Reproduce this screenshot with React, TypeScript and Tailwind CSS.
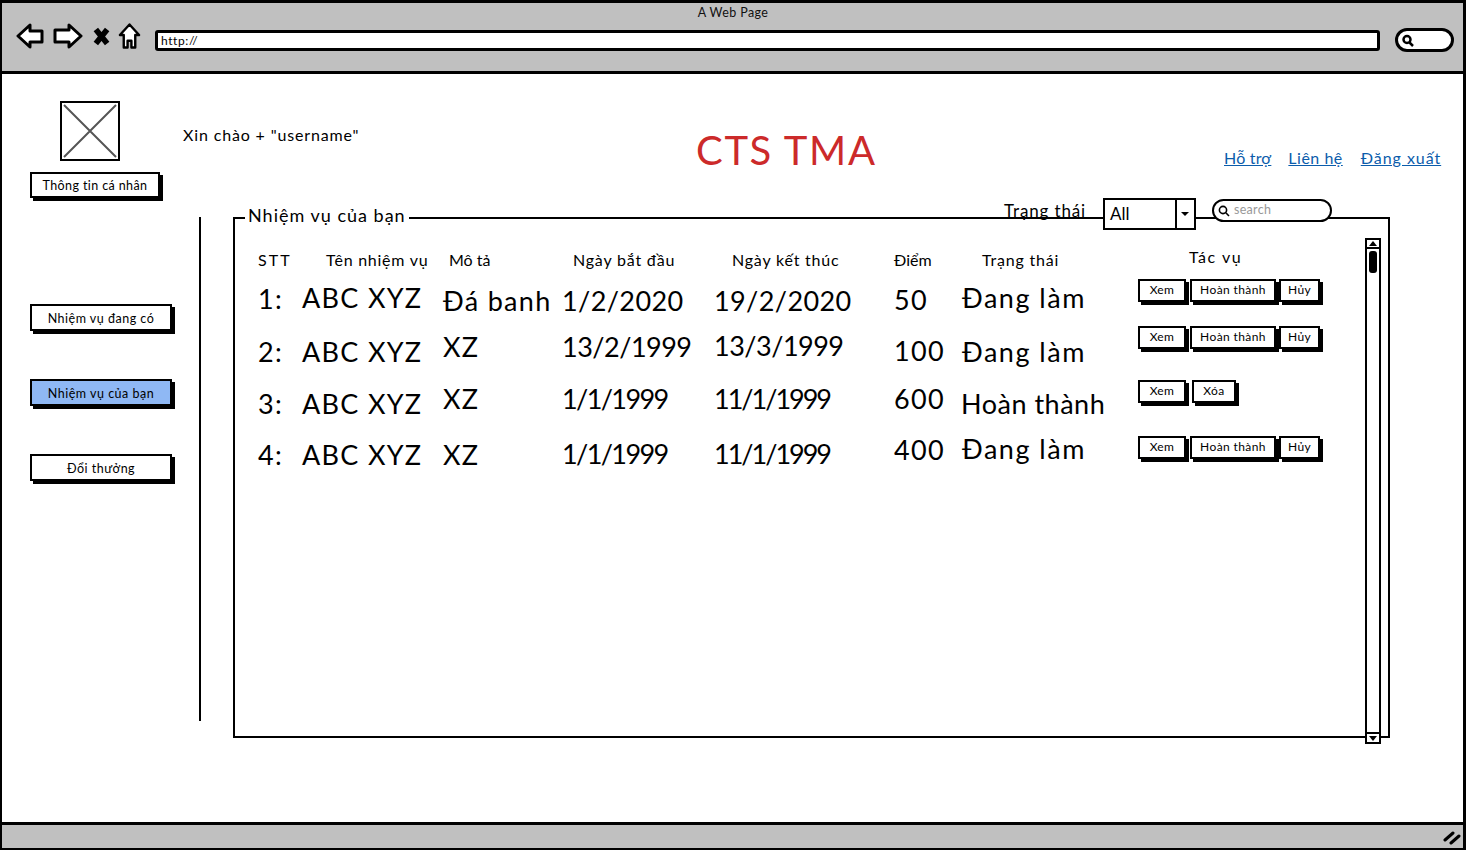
const font = { fontFamily: "Lato, 'Noto Sans', sans-serif" };

function SketchButton({ label, className = "" }: { label: string; className?: string }) {
  return (
    <button className={`flex h-[23px] items-center justify-center border-2 border-black bg-white pb-[2px] text-[12px] tracking-[0.4px] text-black shadow-[3px_3px_0_#000] ${className}`}>
      {label}
    </button>
  );
}

function NavButton({ label, active = false }: { label: string; active?: boolean }) {
  return (
    <button
      className={`flex h-[27px] w-[142px] items-center justify-center border-2 border-black pt-[3px] text-[12.5px] tracking-[0.5px] text-black shadow-[3px_3px_0_#000] ${active ? "bg-[#8fb8f4]" : "bg-white"}`}
    >
      {label}
    </button>
  );
}

function BrowserIcons() {
  return (
    <div className="flex h-[26px] w-[129px] items-center">
      <svg width="28" height="26" viewBox="0 0 28 26" fill="#fff" stroke="#000" strokeWidth="3" strokeLinejoin="round">
        <path d="M2 13 L14 2 V8 H26 V19 H14 V24 Z" />
      </svg>
      <svg className="ml-[9px]" width="30" height="26" viewBox="0 0 30 26" fill="#fff" stroke="#000" strokeWidth="3" strokeLinejoin="round">
        <path d="M28 13 L16 2 V7 H2 V19 H16 V24 Z" />
      </svg>
      <svg className="ml-[10px]" width="17" height="19" viewBox="0 0 18 19" fill="none" stroke="#000" strokeWidth="6">
        <path d="M3 2 L15 17 M15 2 L3 17" />
      </svg>
      <svg className="ml-[8px]" width="23" height="28" viewBox="0 0 24 28" fill="#fff" stroke="#000" strokeWidth="2.5" strokeLinejoin="round">
        <path d="M12 2 L22 13 H18 V26 H14 V19 H10 V26 H6 V13 H2 Z" />
      </svg>
    </div>
  );
}

function Toolbar() {
  return (
    <div className="flex h-[71px] flex-col border-b-[3px] border-black bg-[#c0c0c0]">
      <div className="flex h-[20px] items-center justify-center pl-[1px] text-[12.5px] tracking-[0.4px] text-[#111]">A Web Page</div>
      <div className="flex items-start pl-[14px]">
        <BrowserIcons />
        <div className="ml-[10px] mt-[7px] flex h-[21px] w-[1225px] items-center rounded-[3px] border-[3px] border-black bg-white pl-[3px] text-[12px] tracking-[0.6px] text-black">
          http://
        </div>
        <div className="ml-[15px] mt-[5px] flex h-[24px] w-[59px] items-center rounded-[12px] border-[3px] border-black bg-white pl-[3px]">
          <svg width="13" height="13" viewBox="0 0 13 13" fill="none" stroke="#000" strokeWidth="2.5">
            <circle cx="6" cy="5.5" r="3.5" />
            <path d="M8.5 8.5 L12 12" />
          </svg>
        </div>
      </div>
    </div>
  );
}

function Header() {
  return (
    <div className="flex h-[124px] shrink-0">
      <div className="flex w-[180px] flex-col pl-[28px] pt-[27px]">
        <div className="ml-[30px] h-[60px] w-[60px] border-2 border-black bg-white">
          <svg width="56" height="56" viewBox="0 0 56 56" stroke="#555" strokeWidth="2">
            <path d="M2 2 L54 54 M54 2 L2 54" />
          </svg>
        </div>
        <button className="mt-[11px] flex h-[27px] w-[130px] items-center justify-center border-2 border-black bg-white pt-[3px] text-[12.5px] tracking-[0.4px] text-black shadow-[3px_3px_0_#000]">
          Thông tin cá nhân
        </button>
      </div>
      <div className="w-[514px] pl-[1px] pt-[49px] text-[16px] tracking-[0.85px] text-black">Xin chào + "username"</div>
      <div className="w-[528px] pt-[50px] text-[40px] leading-[52px] tracking-[1.7px] text-[#cc2a2a]">CTS TMA</div>
      <div className="flex pt-[73px] text-[16px] leading-[22px] tracking-[0.5px] text-[#0b5cab]">
        <a className="tracking-[0.2px] underline">Hỗ trợ</a>
        <a className="ml-[17px] underline">Liên hệ</a>
        <a className="ml-[18px] tracking-[0.95px] underline">Đăng xuất</a>
      </div>
    </div>
  );
}

function Sidebar() {
  return (
    <div className="flex w-[199px] shrink-0 justify-between">
      <div className="flex flex-col gap-[48px] pl-[28px] pt-[106px]">
        <NavButton label="Nhiệm vụ đang có" />
        <NavButton label="Nhiệm vụ của bạn" active />
        <NavButton label="Đổi thưởng" />
      </div>
      <div className="mt-[19px] h-[504px] w-[2px] bg-black" />
    </div>
  );
}

const data = "text-[27px] leading-[32px] tracking-[1.3px] text-black";
const date2020 = "text-[27px] leading-[32px] tracking-[0.4px] text-black";
const date1999 = "text-[27px] leading-[32px] tracking-[-0.5px] text-black";
const dateNarrow = "text-[27px] leading-[32px] tracking-[-1.6px] text-black";
const dateElevens = "text-[27px] leading-[32px] tracking-[-2px] text-black";
const head = "text-[16px] leading-[20px] text-black";

function TaskTable() {
  return (
    <div className="grid flex-1 grid-cols-[44px_141px_119px_152px_180px_68px_176px_1fr] content-start pl-[23px] pt-[31px]">
      {/* header row */}
      <div className={`mb-[9px] tracking-[2px] ${head}`}>STT</div>
      <div className={`pl-[24px] tracking-[0.75px] ${head}`}>Tên nhiệm vụ</div>
      <div className={`pl-[6px] tracking-[0px] ${head}`}>Mô tả</div>
      <div className={`pl-[11px] tracking-[0.8px] ${head}`}>Ngày bắt đầu</div>
      <div className={`pl-[18px] tracking-[0.8px] ${head}`}>Ngày kết thúc</div>
      <div className={`tracking-[0px] ${head}`}>Điểm</div>
      <div className={`pl-[20px] tracking-[0.8px] ${head}`}>Trạng thái</div>
      <div className={`-mt-[3px] pl-[51px] tracking-[1.5px] ${head}`}>Tác vụ</div>

      {/* row 1 */}
      <div className={`mt-[4px] h-[43px] ${data}`}>1:</div>
      <div className={`mt-[3px] ${data}`}>ABC XYZ</div>
      <div className={`mt-[6px] ${data}`}>Đá banh</div>
      <div className={`mt-[6px] ${date2020}`}>1/2/2020</div>
      <div className={`mt-[6px] ${date2020}`}>19/2/2020</div>
      <div className={`mt-[5px] ${data}`}>50</div>
      <div className={`mt-[3px] tracking-[1.5px] ${data}`}>Đang làm</div>
      <div className="flex">
        <SketchButton label="Xem" className="w-[48px]" />
        <SketchButton label="Hoàn thành" className="ml-[4px] w-[86px]" />
        <SketchButton label="Hủy" className="ml-[3px] w-[41px]" />
      </div>

      {/* row 2 */}
      <div className={`mt-[10px] h-[44px] ${data}`}>2:</div>
      <div className={`mt-[10px] ${data}`}>ABC XYZ</div>
      <div className={`mt-[5px] ${data}`}>XZ</div>
      <div className={`mt-[5px] whitespace-nowrap ${date1999}`}>13/2/1999</div>
      <div className={`mt-[4px] ${date1999}`}>13/3/1999</div>
      <div className={`mt-[9px] ${data}`}>100</div>
      <div className={`mt-[10px] tracking-[1.5px] ${data}`}>Đang làm</div>
      <div className="flex">
        <SketchButton label="Xem" className="w-[48px]" />
        <SketchButton label="Hoàn thành" className="ml-[4px] w-[86px]" />
        <SketchButton label="Hủy" className="ml-[3px] w-[41px]" />
      </div>

      {/* row 3 */}
      <div className={`mt-[8px] h-[48px] ${data}`}>3:</div>
      <div className={`mt-[8px] ${data}`}>ABC XYZ</div>
      <div className={`mt-[3px] ${data}`}>XZ</div>
      <div className={`mt-[3px] ${dateNarrow}`}>1/1/1999</div>
      <div className={`mt-[3px] ${dateElevens}`}>11/1/1999</div>
      <div className={`mt-[3px] ${data}`}>600</div>
      <div className={`mt-[8px] -ml-[1px] whitespace-nowrap text-[27px] leading-[32px] tracking-[0.5px] text-black`}>Hoàn thành</div>
      <div className="flex">
        <SketchButton label="Xem" className="w-[48px]" />
        <SketchButton label="Xóa" className="ml-[6px] w-[44px]" />
      </div>

      {/* row 4 */}
      <div className={`mt-[3px] ${data}`}>4:</div>
      <div className={`mt-[3px] ${data}`}>ABC XYZ</div>
      <div className={`mt-[3px] ${data}`}>XZ</div>
      <div className={`mt-[2px] ${dateNarrow}`}>1/1/1999</div>
      <div className={`mt-[2px] ${dateElevens}`}>11/1/1999</div>
      <div className={`-mt-[2px] ${data}`}>400</div>
      <div className={`-mt-[3px] tracking-[1.5px] ${data}`}>Đang làm</div>
      <div className="flex">
        <SketchButton label="Xem" className="w-[48px]" />
        <SketchButton label="Hoàn thành" className="ml-[4px] w-[86px]" />
        <SketchButton label="Hủy" className="ml-[3px] w-[41px]" />
      </div>
    </div>
  );
}

function Scrollbar() {
  return (
    <div className="mr-[7px] mt-[19px] flex h-[506px] w-[16px] shrink-0 flex-col border-2 border-black bg-white">
      <div className="flex h-[9px] items-center justify-center border-b-2 border-black">
        <div className="h-0 w-0 border-x-[4px] border-b-[5px] border-x-transparent border-b-black" />
      </div>
      <div className="ml-[2px] mt-[2px] h-[22px] w-[8px] rounded-[3px] bg-black" />
      <div className="flex-1" />
      <div className="flex h-[10px] items-center justify-center border-t-2 border-black">
        <div className="h-0 w-0 border-x-[4px] border-t-[5px] border-x-transparent border-t-black" />
      </div>
    </div>
  );
}

function Panel() {
  return (
    <div className="relative ml-[32px] mt-[19px] flex h-[521px] w-[1157px] border-2 border-black bg-white">
      {/* legend sits over the panel border */}
      <div className="absolute -top-[15px] left-[10px] bg-white px-[3px] text-[18px] leading-[22px] tracking-[1px] text-black">
        Nhiệm vụ của bạn
      </div>
      {/* filter controls sit over the panel border */}
      <div className="absolute -top-[21px] left-[769px] flex items-start">
        <div className="mt-[2px] text-[17px] leading-[22px] tracking-[0.85px] text-black">Trạng thái</div>
        <div className="ml-[17px] flex h-[32px] w-[93px] border-2 border-black bg-white">
          <div className="flex-1 pl-[5px] text-[17px] leading-[28px] text-black">All</div>
          <div className="flex w-[19px] items-center justify-center border-l-2 border-black">
            <div className="h-0 w-0 border-x-[4px] border-t-[4px] border-x-transparent border-t-black" />
          </div>
        </div>
        <div className="ml-[16px] mt-[1px] flex h-[23px] w-[120px] items-center rounded-[12px] border-2 border-black bg-white pl-[4px]">
          <svg width="12" height="12" viewBox="0 0 12 12" fill="none" stroke="#000" strokeWidth="1.6">
            <circle cx="5" cy="5" r="3.6" />
            <path d="M7.8 7.8 L11 11" />
          </svg>
          <span className="ml-[4px] text-[12.5px] tracking-[0.3px] text-[#999]">search</span>
        </div>
      </div>
      <TaskTable />
      <Scrollbar />
    </div>
  );
}

export default function App() {
  return (
    <div className="h-[851px] w-[1467px] bg-white" style={font}>
      <div className="flex h-[850px] w-[1466px] flex-col border-2 border-t-[3px] border-r-[3px] border-black bg-white">
        <Toolbar />
        <div className="flex flex-1 flex-col">
          <Header />
          <div className="flex flex-1">
            <Sidebar />
            <Panel />
          </div>
        </div>
        <div className="flex h-[26px] items-end justify-end border-t-[3px] border-black bg-[#c0c0c0] pb-[3px] pr-[2px]">
          <svg width="18" height="14" viewBox="0 0 18 14" fill="none" stroke="#000" strokeWidth="3" strokeLinecap="round">
            <path d="M2 9 L10 2 M8 12 L16 5" />
          </svg>
        </div>
      </div>
    </div>
  );
}
